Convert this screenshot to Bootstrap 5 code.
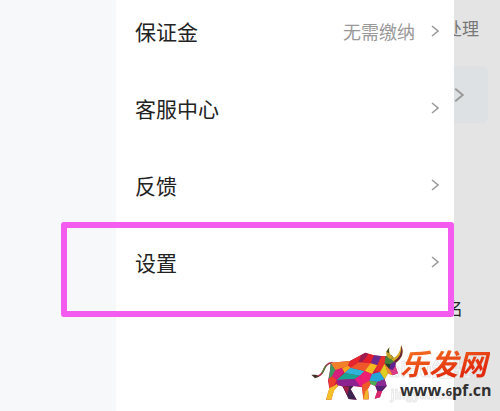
<!DOCTYPE html>
<html lang="zh-CN">
<head>
<meta charset="utf-8">
<meta name="viewport" content="width=device-width, initial-scale=1">
<title>设置</title>
<link href="https://cdn.jsdelivr.net/npm/bootstrap@5.3.0/dist/css/bootstrap.min.css" rel="stylesheet">
<style>
body{font-family:"Noto Sans CJK SC","Liberation Sans",sans-serif;background:#f6f8fa;color:#222}
.shell{min-height:100vh}
.rail{width:116px;background:#f6f8fa}
.drawer{background:#fff;min-width:0}
.behind{width:46px;background:#e4e4e4}
.menu{gap:15px}
.menu a{height:62px;padding:0 15px 0 19px;color:#222;font-size:21px;line-height:30px}
.menu .value{font-size:18px;color:#999;margin-right:16px}
.chev{width:8px;height:12px;fill:none;stroke:#999;stroke-width:1.5}
.peek-title{font-size:17px;line-height:24px;padding:16px 21px 0 0;color:#777}
.peek-card{height:57px;margin:26px 12px 0 0;background:#dee1e3;border-radius:0 6px 6px 0}
.peek-card .chev{width:10px;height:16px}
.peek-name{font-size:17px;line-height:24px;margin-top:173px;padding-right:37px;color:#222}
.marker{left:61px;right:46px;top:222px;height:95px;border:6px solid #f45cf0;border-radius:3px;pointer-events:none}
.brand{right:10px;top:344px;color:#303030}
.bull{width:96px;height:56px}
.brand-text{width:90px;margin-left:-6px;white-space:nowrap}
.brand-cn{font-size:29px;line-height:36px;font-weight:700;font-style:italic;background:linear-gradient(165deg,#f36a20 20%,#e22b0d 75%);-webkit-background-clip:text;background-clip:text;color:transparent}
.brand-url{font:700 16px/20px "Open Sans","Noto Sans",sans-serif;color:#303030}
.brand-url span{font-size:11px}
.wm{right:28px;top:358px;font:700 20px/22px "Noto Sans CJK SC",sans-serif;color:#fff;-webkit-text-stroke:1px #dedede;opacity:.7;white-space:nowrap}
.wm small{font-size:12px;line-height:14px}
</style>
<script src="https://cdn.jsdelivr.net/npm/bootstrap@5.3.0/dist/js/bootstrap.bundle.min.js"></script>
</head>
<body>
<div class="shell d-flex position-relative overflow-hidden">
  <div class="rail flex-shrink-0"></div>
  <main class="drawer flex-grow-1">
    <nav class="menu d-flex flex-column">
      <a href="#" class="d-flex align-items-center text-decoration-none"><span class="me-auto">保证金</span><span class="value">无需缴纳</span><svg class="chev" viewBox="0 0 8 12"><path d="M1 1l6 5-6 5"/></svg></a>
      <a href="#" class="d-flex align-items-center text-decoration-none"><span class="me-auto">客服中心</span><svg class="chev" viewBox="0 0 8 12"><path d="M1 1l6 5-6 5"/></svg></a>
      <a href="#" class="d-flex align-items-center text-decoration-none"><span class="me-auto">反馈</span><svg class="chev" viewBox="0 0 8 12"><path d="M1 1l6 5-6 5"/></svg></a>
      <a href="#" class="d-flex align-items-center text-decoration-none"><span class="me-auto">设置</span><svg class="chev" viewBox="0 0 8 12"><path d="M1 1l6 5-6 5"/></svg></a>
    </nav>
  </main>
  <aside class="behind flex-shrink-0 overflow-hidden text-nowrap">
    <div class="peek-title d-flex justify-content-end"><span>处理</span></div>
    <div class="peek-card d-flex align-items-center"><svg class="chev" viewBox="0 0 8 12"><path d="M1 1l6 5-6 5"/></svg></div>
    <div class="peek-name d-flex justify-content-end"><span>名</span></div>
  </aside>
  <div class="marker position-absolute"></div>
  <div class="wm position-absolute text-end" aria-hidden="true">Baidu经验<br><small>jingyan.baidu</small></div>
  <div class="brand position-absolute d-flex">
    <svg class="bull flex-shrink-0" viewBox="30 42 288 168" role="img" aria-label="乐发网">
      <path d="M98 98C82 98 76 108 69 124Q60 142 44 138" fill="none" stroke="#a52a40" stroke-width="5"/>
      <path d="M78 106Q72 118 66 130" fill="none" stroke="#4f7f3a" stroke-width="4"/>
      <path d="M34 134l14 0 9 6-12 5z" fill="#413126"/>
      <!-- body -->
      <path d="M92 98L150 93 196 68 222 76 252 79 274 75 288 92 286 108 294 130 278 136 264 130 254 148 260 168 246 184 240 202 224 206 232 184 226 168 212 162 204 176 206 208 190 208 186 172 160 168 152 178 170 209 146 207 128 170 116 166 102 180 94 209 78 209 88 176 84 152 90 122z" fill="#c01a50"/>
      <path d="M92 98l58-5-6 14-38 14z" fill="#f2802a"/>
      <path d="M92 98l14 23-10 18-10 8 4-25z" fill="#3f9a62"/>
      <path d="M106 121l20-7 4 14-20 22-14-11z" fill="#d61f7c"/>
      <path d="M86 147l10-8 14 11-8 18-14 6z" fill="#ee3f2c"/>
      <path d="M88 174l14-6 8-6 4 6-12 14-8 27H78z" fill="#f3c02a"/>
      <path d="M144 107l6-14 34-18-8 22-24 16z" fill="#e6252e"/>
      <path d="M126 114l18-7 8 6-18 16z" fill="#f8a31f"/>
      <path d="M134 129l18-16 42 10-14 14z" fill="#2fb5da"/>
      <path d="M110 150l24-21 46 8-16 10z" fill="#18a594"/>
      <path d="M110 150l54-3 20 22-56-1-14-2z" fill="#8c2290"/>
      <path d="M164 147l16-10 8 34-8-3z" fill="#e71c86"/>
      <path d="M128 168l32 0-8 10 18 31-24-2z" fill="#3c2350"/>
      <path d="M128 168l20 2-6 24z" fill="#a01f45"/>
      <path d="M184 75l12-7 10 4-20 25-10 0z" fill="#9b1c50"/>
      <path d="M206 72l16 4-10 24-26-3z" fill="#e51e2b"/>
      <path d="M176 97l36 3-18 23-42-10z" fill="#f0582a"/>
      <path d="M212 100l10-24 22 3-12 27z" fill="#6a2c8f"/>
      <path d="M212 100l20 6-16 26-22-9z" fill="#f7b920"/>
      <path d="M180 137l14-14 22 9-8 20-22 12z" fill="#ec1f73"/>
      <path d="M186 164l22-12 4 10-8 14 2 32h-16z" fill="#ee5a28"/>
      <path d="M204 176l2 32h-16l6-24z" fill="#f2b32a"/>
      <path d="M216 132l24-6 14 22-22 8-24-4z" fill="#25a6d8"/>
      <path d="M208 152l24 4-6 12-14-6z" fill="#4caf50"/>
      <path d="M232 156l22-8 6 20-14 0-20 0z" fill="#8a2a93"/>
      <path d="M226 168l34 0-14 16-14 0z" fill="#542174"/>
      <path d="M232 184l14 0-6 18-16 4z" fill="#d9266d"/>
      <path d="M232 106l12-27 12 0-2 22-14 25-16-2z" fill="#e7322b"/>
      <path d="M240 126l14-25 10 29-10 18z" fill="#dfce22"/>
      <path d="M254 101l2-22 18-4 14 17-16 10z" fill="#43803a"/>
      <path d="M254 101l18 1-4 16z" fill="#203f2c"/>
      <path d="M272 102l16-10-2 16-8 12-10-2z" fill="#5d258f"/>
      <path d="M268 118l10 2 8-12 8 22-16 6z" fill="#d83a86"/>
      <path d="M254 101l14 17 10 18-14-6z" fill="#f0902a"/>
      <!-- horns -->
      <path d="M272 88Q256 80 259 65L268 52Q264 72 280 82Z" fill="#c4a024"/>
      <path d="M259 65L268 52Q266 62 267 70Z" fill="#3e4f25"/>
      <path d="M274 88Q300 78 303 46Q318 76 287 99Z" fill="#d8a922"/>
      <path d="M281 94Q308 78 303 46Q318 76 287 99Z" fill="#69263b"/>
    </svg>
    <div class="brand-text">
      <div class="brand-cn">乐发网</div>
      <div class="brand-url">www.<span>6</span>pf.cn</div>
    </div>
  </div>
</div>
</body>
</html>
